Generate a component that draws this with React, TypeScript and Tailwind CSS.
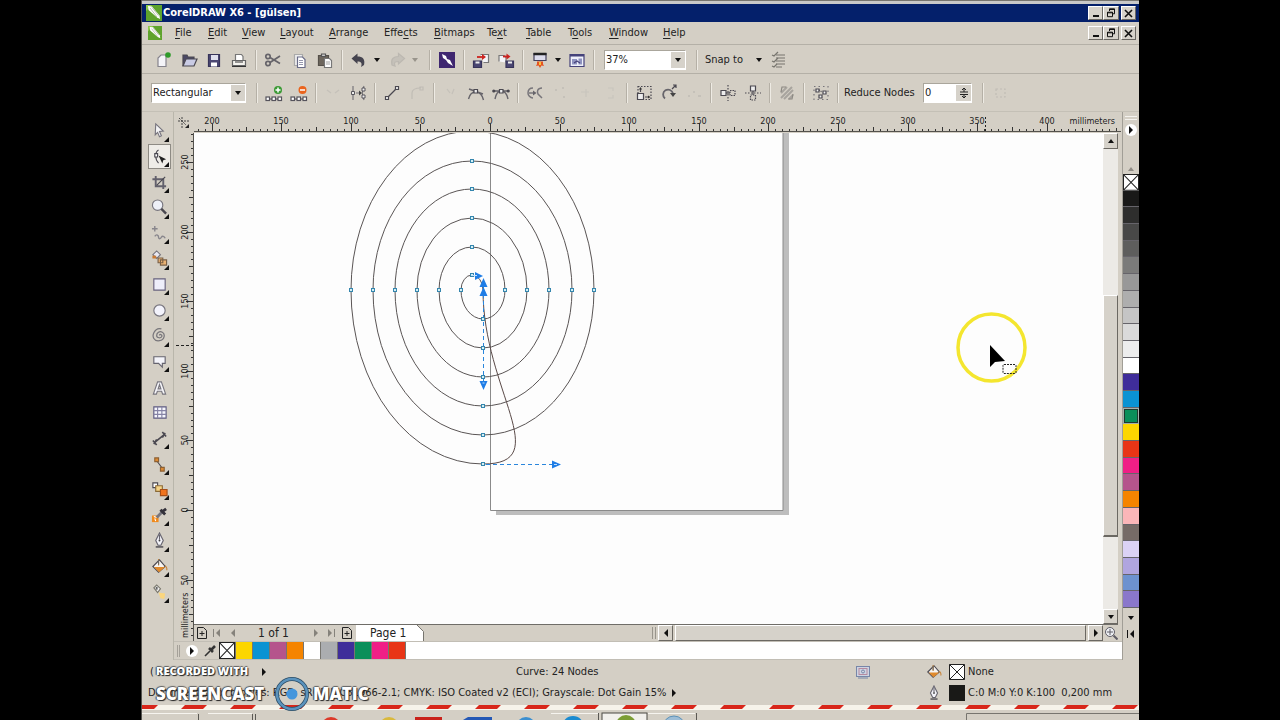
import React from "react";
import clsx from "clsx";

// ---------- small building blocks ----------

const RAISED =
  "border border-t-white border-l-white border-r-[#6b6862] border-b-[#6b6862] bg-[#d6d2ca]";

const Svg = ({ children, size = 18 }: { children: React.ReactNode; size?: number }) => (
  <svg width={size} height={size} viewBox="0 0 18 18" fill="none" stroke="#4a4850" strokeWidth="1.2">
    {children}
  </svg>
);

const Tri = ({ dir, color = "#111" }: { dir: "up" | "down" | "left" | "right"; color?: string }) => {
  const points = {
    up: "1,6 4,2 7,6",
    down: "1,2 7,2 4,6",
    left: "6,0 2,4 6,8",
    right: "2,0 6,4 2,8",
  }[dir];
  return (
    <svg width="8" height="8" viewBox="0 0 8 8" className="shrink-0">
      <polygon points={points} fill={color} />
    </svg>
  );
};

const Sep = () => (
  <span className="flex w-[9px] shrink-0 justify-center">
    <span className="h-5 w-px bg-[#b5b0a6]" />
    <span className="h-5 w-px bg-[#eeebe4]" />
  </span>
);

const ToolButton = ({ label, faint, children }: { label: string; faint?: boolean; children: React.ReactNode }) => (
  <button
    aria-label={label}
    className={clsx("flex h-6 w-[25px] shrink-0 items-center justify-center", faint && "opacity-25")}
  >
    <Svg>{children}</Svg>
  </button>
);

const DropArrow = ({ label, color }: { label: string; color?: string }) => (
  <button aria-label={label} className="flex h-6 w-3 shrink-0 items-center justify-center">
    <Tri dir="down" color={color} />
  </button>
);

const Combo = ({ label, value, className }: { label: string; value: string; className: string }) => (
  <label
    className={clsx("flex h-5 shrink-0 items-center border border-[#aaa69c] border-r-white border-b-white bg-white", className)}
  >
    <select aria-label={label} className="h-full min-w-0 flex-1 appearance-none bg-transparent pl-px outline-none">
      <option>{value}</option>
    </select>
    <span className="flex h-4 w-[14px] items-center justify-center bg-[#d6d2ca]">
      <Tri dir="down" />
    </span>
  </label>
);

const AppLogo = ({ size }: { size: number }) => (
  <svg width={size} height={size} viewBox="0 0 16 16" className="shrink-0">
    <rect width="16" height="16" fill="#5fa32c" />
    <path d="M0 0h6L0 6z" fill="#8fcb4a" />
    <path d="M2 1l4 .5 7.500 9L14 14l-3-1.500L2.500 5z" fill="#fff" />
    <path d="M4 3l7 9M6 2.500l6.500 8" stroke="#9aa58e" strokeWidth=".7" />
  </svg>
);

// ---------- window chrome ----------

const WindowButtons = () => (
  <div className="flex h-[14px] text-[#111]">
    <button aria-label="Minimize" className={clsx("flex w-[15px] items-end justify-center pb-0.5", RAISED)}>
      <span className="h-0.5 w-1.5 bg-[#111]" />
    </button>
    <button aria-label="Restore" className={clsx("flex w-4 items-center justify-center", RAISED)}>
      <svg width="10" height="10" viewBox="0 0 10 10" fill="none" stroke="#111">
        <path d="M3.500 3V.8h5v5H7M3 1.500h6M1.500 4.200h5v4.500h-5zM1 4.800h6" />
      </svg>
    </button>
    <button aria-label="Close" className={clsx("ml-0.5 flex w-[15px] items-center justify-center", RAISED)}>
      <svg width="9" height="9" viewBox="0 0 9 9" stroke="#111" strokeWidth="1.600">
        <path d="M1 1l7 7M8 1L1 8" />
      </svg>
    </button>
  </div>
);

// [before, accelerator, after, width]
const MENUS: [string, string, string, string][] = [
  ["", "F", "ile", "w-[33px]"],
  ["", "E", "dit", "w-[34px]"],
  ["", "V", "iew", "w-[38px]"],
  ["", "L", "ayout", "w-[49px]"],
  ["", "A", "rrange", "w-[55px]"],
  ["Effe", "c", "ts", "w-[50px]"],
  ["", "B", "itmaps", "w-[53px]"],
  ["Te", "x", "t", "w-[39px]"],
  ["", "T", "able", "w-[42px]"],
  ["T", "o", "ols", "w-[41px]"],
  ["", "W", "indow", "w-[54px]"],
  ["", "H", "elp", "w-[33px]"],
];

const MenuBar = () => (
  <nav className="flex h-[23px] items-center border-b border-[#b4b0a7] pr-[3px] pl-[6px]">
    <AppLogo size={14} />
    <div className="ml-[13px] flex">
      {MENUS.map(([pre, key, post, width]) => (
        <button key={pre + key + post} className={clsx("text-left whitespace-nowrap", width)}>
          {pre}
          <u className="underline-offset-2">{key}</u>
          {post}
        </button>
      ))}
    </div>
    <div className="ml-auto">
      <WindowButtons />
    </div>
  </nav>
);

// ---------- toolbars ----------

const StandardBar = () => (
  <div className="flex h-[29px] items-center border-b border-[#b4b0a7] pt-0.5 pl-[9px]">
    <div className="flex">
      <ToolButton label="New">
        <path d="M3 15.500V7l3-3h5v11.500z" fill="#f4f4f8" stroke="#85838c" />
        <circle cx="13" cy="4" r="2.800" fill="#2e9b2a" stroke="none" />
      </ToolButton>
      <ToolButton label="Open">
        <path d="M3 15V4h4l1 2h6v2" fill="#4b4866" />
        <path d="M3 15l3-7h11l-3 7z" fill="#c9cbe4" />
      </ToolButton>
      <ToolButton label="Save">
        <path d="M3.500 3.500h11v12h-11z" fill="#4b4772" stroke="#37345a" />
        <path d="M6 4h7v5H6z" fill="#dfe0ee" stroke="none" />
        <path d="M6 11.500h6v4H6z" fill="#fff" stroke="none" />
      </ToolButton>
      <ToolButton label="Print">
        <path d="M5.500 10V3.500h6l1.500 2V10" fill="#fff" stroke="#777" />
        <path d="M2.500 9.500h13v5h-13z" fill="#f4f3ee" stroke="#666" />
        <path d="M2 15.500h14M5 11h8" stroke="#333" />
      </ToolButton>
    </div>
    <Sep />
    <div className="flex gap-px">
      <ToolButton label="Cut">
        <g strokeWidth="1.700" stroke="#66646a">
          <circle cx="4" cy="5.500" r="2.200" />
          <circle cx="4" cy="12.500" r="2.200" />
          <path d="M6 6.500l10 6M6 11.500L16 5" />
        </g>
      </ToolButton>
      <ToolButton label="Copy">
        <path d="M4.500 3.500h8v11h-8z" fill="#eee" stroke="#aaa" />
        <path d="M7.500 6h5l2.500 2.500v8H7.500z" fill="#fff" stroke="#6a6c88" />
        <path d="M9 9.500h4M9 11.500h4M9 13.500h4" stroke="#7a7c98" strokeWidth=".8" />
      </ToolButton>
      <ToolButton label="Paste">
        <path d="M2.500 4.500h10v10h-10z" fill="#6d665d" stroke="#55504a" />
        <path d="M5.500 3h4v2.500h-4z" fill="#ccc" stroke="#555" />
        <path d="M8.500 7.500h5l2 2v7h-7z" fill="#fff" stroke="#777" />
        <path d="M10 11h4M10 13h4" stroke="#888" strokeWidth=".8" />
      </ToolButton>
    </div>
    <Sep />
    <ToolButton label="Undo">
      <path d="M1.500 7.500l6-5v3c5 0 8 2.500 6.500 8.500l-3 2c1.500-4 0-5.500-3.500-5.500V13z" fill="#45444f" stroke="none" />
    </ToolButton>
    <DropArrow label="Undo list" />
    <span className="w-px" />
    <ToolButton label="Redo" faint>
      <path d="M16.500 7.500l-6-5v3C5.500 5.500 2.500 8 4 14l3 1c-1.500-4 0-4.500 3.500-4.500V13z" fill="#999" stroke="#777" />
    </ToolButton>
    <DropArrow label="Redo list" color="#98948b" />
    <span className="w-1" />
    <Sep />
    <ToolButton label="Search content">
      <path d="M1 1h16v16H1z" fill="#3f2770" stroke="none" />
      <path d="M4 3l4 2 1 3 3 1 3 6-5-3-2-3-3-2z" fill="#fff" stroke="none" />
    </ToolButton>
    <Sep />
    <ToolButton label="Import">
      <path d="M8.500 3.500h8v8h-5" fill="#f4f4f8" stroke="#777" />
      <path d="M1.500 10h8v6.500h-8z" fill="#4a4672" stroke="#37345a" />
      <path d="M3.500 10.500h4v2h-4z" fill="#eee" stroke="none" />
      <path d="M5 6h6" stroke="#cc2420" strokeWidth="1.800" />
      <path d="M10 3l4 3-4 3z" fill="#cc2420" stroke="none" />
    </ToolButton>
    <ToolButton label="Export">
      <path d="M2 10.500v-6h5l2 2v5" fill="#f4f4f8" stroke="#777" />
      <path d="M9 10h7.500v6.500H9z" fill="#4a4672" stroke="#37345a" />
      <path d="M11 10.500h4v2h-4z" fill="#eee" stroke="none" />
      <path d="M6 5.500h5" stroke="#cc2420" strokeWidth="1.800" />
      <path d="M9.500 2.500l4 3-4 3z" fill="#cc2420" stroke="none" />
    </ToolButton>
    <Sep />
    <ToolButton label="Application launcher">
      <path d="M3 2.500h12v7H3z" fill="#dcdcec" stroke="#44415e" />
      <path d="M2.500 3h13" stroke="#222" strokeWidth="2.500" />
      <path d="M6 10.500h6V13l1 2-2.500-.5L9 17l-1.500-2.500L5 15l1-2z" fill="#e55320" stroke="none" />
      <path d="M8 11h2v3H8z" fill="#f7c33c" stroke="none" />
    </ToolButton>
    <DropArrow label="Launcher list" />
    <ToolButton label="Welcome screen">
      <path d="M2 3.500h14v12H2z" fill="#eef0fa" stroke="#45427a" />
      <path d="M2 4.500h14" stroke="#45427a" strokeWidth="2" />
      <path d="M4 8h5v5.500H4zM10.500 7.500h3.500v6h-3.500z" fill="#8f93c0" stroke="none" />
      <path d="M6 12l3-2 3 2" stroke="#45427a" />
    </ToolButton>
    <Sep />
    <Combo label="Zoom level" value="37%" className="ml-1.5 w-[82px]" />
    <span className="w-1.5" />
    <Sep />
    <button className="ml-1 w-12 shrink-0 text-left whitespace-nowrap">Snap to</button>
    <DropArrow label="Snap options" />
    <ToolButton label="Options">
      <path d="M7 4h9M7 7h9M7 10h9M7 13h9M7 16h6" stroke="#77756e" />
      <path d="M3 4l2 1 4-4M3 10l2 1 4-4M3 15l2 1 3-3" stroke="#77756e" />
    </ToolButton>
  </div>
);

const NodeRow = ({ y = 13 }: { y?: number }) => (
  <>
    {[2, 8, 14].map((x) => (
      <rect key={x} x={x - 1} y={y} width="3.500" height="3.500" fill="#fff" stroke="#55535c" />
    ))}
    <path d={`M5 ${y + 2}h2M11 ${y + 2}h2`} strokeWidth="1" />
  </>
);

const PropertyBar = () => (
  <div className="flex h-[38px] items-center border-b border-[#c4c0b6] pl-[9px]">
    <Combo label="Selection mode" value="Rectangular" className="w-[95px]" />
    <span className="w-[6px]" />
    <Sep />
    <ToolButton label="Add node">
      <NodeRow />
      <circle cx="13" cy="6" r="4" fill="#3b9a35" stroke="none" />
      <path d="M10.500 6h5M13 3.500v5" stroke="#fff" strokeWidth="1.500" />
    </ToolButton>
    <ToolButton label="Delete node">
      <NodeRow />
      <circle cx="12.500" cy="6" r="4" fill="#ea641d" stroke="none" />
      <path d="M10 6h5" stroke="#fff" strokeWidth="1.500" />
    </ToolButton>
    <Sep />
    <ToolButton label="Join nodes" faint>
      <path d="M3 6l4 3M15 6l-4 3" stroke="#999" />
    </ToolButton>
    <ToolButton label="Break curve">
      <path d="M4 2v14M15 2c-2 4-2 9 0 14M7 9h4" stroke="#77757a" />
      <path d="M10 6.500L13 9l-3 2.500z" fill="#444" stroke="none" />
      <path d="M2.500 7.500h3v3h-3zM13 4h3v3h-3zM13 11h3v3h-3z" fill="#eee" strokeWidth=".9" />
    </ToolButton>
    <Sep />
    <ToolButton label="Convert to line">
      <path d="M4.500 13.500l9-9" />
      <path d="M2.500 12.500h3v3h-3zM12.500 2.500h3v3h-3z" fill="#eee" />
    </ToolButton>
    <ToolButton label="Convert to curve" faint>
      <path d="M4 15V9c0-4 4-5 9-5M12 3h3v3h-3z" stroke="#888" />
    </ToolButton>
    <Sep />
    <ToolButton label="Cusp node" faint>
      <path d="M5 5l3 4M12 5l-2 5" stroke="#999" />
    </ToolButton>
    <ToolButton label="Smooth node">
      <path d="M2 5l14 5M1.500 15c1-4 3-7 7-7 5 0 7 4 8 8" stroke="#66646a" strokeWidth="1.400" />
      <path d="M7 5.500h3.500V9H7z" fill="#eee" />
    </ToolButton>
    <ToolButton label="Symmetrical node">
      <path d="M1 7h16M3 15c1-5 3-8 6-8s6 3 7 8" stroke="#66646a" strokeWidth="1.400" />
      <path d="M7.500 5.500H11V9H7.500z" fill="#eee" />
      <circle cx="1.800" cy="7" r="1" fill="#444" />
      <circle cx="16.200" cy="7" r="1" fill="#444" />
    </ToolButton>
    <Sep />
    <ToolButton label="Reverse direction">
      <path d="M7 4C3 4 2 7 2 9s2 5 5 5M3 9h6M16 4c-5 0-5 4-4 6l4 4" stroke="#77757a" strokeWidth="1.500" />
      <path d="M7 6.500L10.500 9 7 11.500z" fill="#66646a" stroke="none" />
    </ToolButton>
    <ToolButton label="Extend curve" faint>
      <path d="M4 6h2M11 4h2M12 13h2" stroke="#999" strokeWidth="2" />
    </ToolButton>
    <ToolButton label="Extract subpath" faint>
      <path d="M5 8h8M10 5v8" stroke="#aaa" />
    </ToolButton>
    <ToolButton label="Close curve" faint>
      <path d="M7 4h5v3M12 11v3H7" stroke="#aaa" />
    </ToolButton>
    <Sep />
    <ToolButton label="Stretch nodes">
      <path d="M3 2.500h13v13H3z" strokeDasharray="1.500 1.500" />
      <path d="M2.500 9.500h6v6h-6z" fill="#eee" />
      <path d="M5.500 8V4M10 13h4" />
      <path d="M4 5.500L5.500 3 7 5.500zM13 11.500l2.500 1.500-2.500 1.500z" fill="#333" stroke="none" />
    </ToolButton>
    <ToolButton label="Rotate nodes">
      <path d="M5 14.500A5 5 0 1 1 13 9.500" strokeWidth="1.800" stroke="#66646a" />
      <path d="M10 9h6l-3 4z" fill="#444" stroke="none" />
      <path d="M12 5l4-4M13 1h3v3" />
    </ToolButton>
    <ToolButton label="Align nodes" faint>
      <path d="M3 12h2M8 8h2M13 12h3" stroke="#999" strokeWidth="2" />
    </ToolButton>
    <Sep />
    <ToolButton label="Reflect horizontally">
      <path d="M9 1v16" strokeDasharray="1.500 1.500" />
      <path d="M2 6.500h5v5H2z" fill="#eee" />
      <path d="M11 6.500h5v5h-5z" strokeDasharray="1.500 1" />
      <path d="M7 9h4" />
    </ToolButton>
    <ToolButton label="Reflect vertically">
      <path d="M1 9h16" strokeDasharray="1.500 1.500" />
      <path d="M6.500 2h5v5h-5z" fill="#eee" />
      <path d="M6.500 11h5v5h-5z" strokeDasharray="1.500 1" />
      <path d="M9 7v4" />
    </ToolButton>
    <Sep />
    <ToolButton label="Elastic mode">
      <path d="M3 9l6-6M3 14L14 3M6 15l9-9M11 15l4-4" stroke="#a8a49e" strokeWidth="2" />
      <path d="M8 3H4L3 8M10 15h4l1-5" stroke="#8b8882" />
    </ToolButton>
    <Sep />
    <ToolButton label="Select all nodes">
      <path d="M2 2.500h14v13H2z" stroke="#77757a" strokeDasharray="1.500 3" />
      <path d="M4 5h3v3H4zM11 7h3v3h-3zM7 11h3v3H7z" fill="#eee" />
      <path d="M7 6l3 2" strokeDasharray="1 1" />
    </ToolButton>
    <Sep />
    <label className="ml-0.5 flex shrink-0 items-center whitespace-nowrap">
      <span className="w-[79px]">Reduce Nodes</span>
      <span className="flex h-5 w-[49px] items-center border border-[#aaa69c] border-r-white border-b-white bg-white">
        <input defaultValue="0" className="w-8 pl-px outline-none" />
        <span className="flex h-4 flex-1 items-center justify-center bg-[#d6d2ca]">
          <svg width="10" height="12" viewBox="0 0 10 12" stroke="#222" fill="none">
            <path d="M1 5h8M1 7.500h8M5 1v4M5 7v4" />
            <path d="M3 3l2-2 2 2M3 9l2 2 2-2" />
          </svg>
        </span>
      </span>
    </label>
    <span className="w-1.5" />
    <Sep />
    <ToolButton label="Bounding box" faint>
      <path d="M5 5h9v8H5z" stroke="#888" strokeDasharray="2 2" />
    </ToolButton>
  </div>
);

// ---------- toolbox ----------

const Bucket = () => (
  <>
    <path d="M2 9l7-7 6 7-7 6z" fill="#f6f4f2" />
    <path d="M3 9.500h12L8.500 15z" fill="#e08a2d" stroke="none" />
    <path d="M8 1v7M15 8c2 2 2 4 1.500 5" stroke="#c8853c" />
    <path d="M8 2v5" stroke="#666" />
  </>
);

const PenNib = () => (
  <>
    <path d="M9 1l4 8-2.500 5h-3L5 9z" fill="#f2f2f8" stroke="#66646f" />
    <path d="M9 3v5" stroke="#66646f" />
    <path d="M5 15.800h8" strokeWidth="1.500" />
    <circle cx="9" cy="9" r="1" fill="#444" stroke="none" />
  </>
);

const TOOLS: { label: string; flyout?: boolean; icon: React.ReactNode }[] = [
  { label: "Pick", flyout: true, icon: <path d="M5 2l8 7.500-4 .5 2 4.500-2 1L7 11l-2.500 2.500z" fill="#f4f4f6" stroke="#77757e" /> },
  {
    label: "Shape",
    flyout: true,
    icon: (
      <>
        <path d="M8 2C4 4 4 12 8 16" />
        <path d="M4 6h3v3.500H4z" fill="#fff" />
        <path d="M8 8l8 4-3 1-1 3.500z" fill="#222" stroke="none" />
      </>
    ),
  },
  {
    label: "Crop",
    flyout: true,
    icon: (
      <>
        <path d="M5 2v11h11M1.500 5.500H13V16" strokeWidth="2" stroke="#62606c" />
        <path d="M6 12l9-9" />
      </>
    ),
  },
  {
    label: "Zoom",
    flyout: true,
    icon: (
      <>
        <circle cx="7" cy="6.500" r="5.500" fill="#eef0f8" stroke="#77757e" />
        <path d="M11 10.500l5 5" strokeWidth="2.500" />
      </>
    ),
  },
  {
    label: "Freehand",
    flyout: true,
    icon: <path d="M4 1v6M1 4h6M4 12c2-3 4-1 4 1s2 2 3 0 3-1 4 1" stroke="#88868c" strokeWidth="1.500" />,
  },
  {
    label: "Smart fill",
    flyout: true,
    icon: (
      <>
        <path d="M2 5l4-4 4 4-4 4z" fill="#e9e9f2" stroke="#77757e" />
        <path d="M1.500 6h4v3h-4z" fill="#c87a35" stroke="none" />
        <path d="M7.500 8.500h5v5h-5zM10 10.500h6.500V16H10z" fill="#eab273" stroke="#7a6046" />
      </>
    ),
  },
  { label: "Rectangle", flyout: true, icon: <path d="M3 3h12v12H3z" fill="#eeeefa" stroke="#66607c" /> },
  { label: "Ellipse", flyout: true, icon: <circle cx="9" cy="9" r="6" fill="#f3f3fc" stroke="#77757e" /> },
  {
    label: "Spiral",
    flyout: true,
    icon: <path d="M9 9c0-2 3-1 2.500 1S6 12 6 9s3-5 6-3.500 3 8-3 9S1 10 3 6s5-5 8-4" stroke="#77757a" strokeWidth="1.300" />,
  },
  { label: "Callout", flyout: true, icon: <path d="M3 4h12v7h-3v4l-4-4H3z" fill="#f4f4fa" stroke="#66646f" /> },
  {
    label: "Text",
    icon: <path d="M2.500 16L7 3h4l4.500 13h-3.200l-1-3H6.700l-1 3zM7.500 10.500h3L9 6z" fill="#f6f6fa" stroke="#77757e" />,
  },
  {
    label: "Table",
    icon: (
      <>
        <path d="M3 3h13v12H3z" fill="#f6f6fd" stroke="#5d5a80" />
        <path d="M7 3v12M11.500 3v12M3 7h13M3 11h13" stroke="#8583a5" />
      </>
    ),
  },
  { label: "Dimension", flyout: true, icon: <path d="M4 13L14 5M2 11l4 5M12 2l4 5M3 15l3-5M15 3l-3 5" strokeWidth="1.700" /> },
  {
    label: "Connector",
    flyout: true,
    icon: (
      <>
        <path d="M6 5l6 8" />
        <path d="M4 2h4v4H4zM10 12h4v4h-4z" fill="#dc8a34" stroke="#8d6032" />
      </>
    ),
  },
  {
    label: "Blend",
    flyout: true,
    icon: (
      <>
        <path d="M2 2h5v5H2z" fill="#fff" />
        <path d="M5 5h7v6H5z" fill="#f6d487" stroke="#8a6a37" />
        <path d="M10 9h7v6.500h-7z" fill="#f0731d" stroke="#a54e17" />
      </>
    ),
  },
  {
    label: "Color eyedropper",
    flyout: true,
    icon: (
      <>
        <path d="M1 9h7v7H1z" fill="#ef8a1c" stroke="none" />
        <path d="M4 12l1 3M3 10l3 1" stroke="#fff" />
        <path d="M6 11l6-6" stroke="#77757e" strokeWidth="3" />
        <path d="M10 3l5 5M12 5l4-3" stroke="#33313a" strokeWidth="3" />
      </>
    ),
  },
  { label: "Outline pen", flyout: true, icon: <PenNib /> },
  { label: "Fill", flyout: true, icon: <Bucket /> },
  {
    label: "Interactive fill",
    flyout: true,
    icon: (
      <>
        <path d="M3 4l3-3 4 4-3 4z" fill="#eee" stroke="#77756a" />
        <path d="M6 3v3" stroke="#666" strokeWidth="2" />
        <path d="M8 9l7 1-1 6-4-1z" fill="#fbd67e" stroke="none" />
      </>
    ),
  },
];

const Toolbox = () => (
  <aside className="w-8 shrink-0 border-r border-[#b9b6ab] pt-1.5 pl-1.5">
    <div className="grid h-[487px] auto-rows-fr">
      {TOOLS.map(({ label, flyout, icon }) => (
        <button
          key={label}
          aria-label={label}
          className={clsx(
            "relative flex w-[23px] items-center justify-center border",
            label === "Shape" ? "border-[#8e8b84] bg-[#efede8]" : "border-transparent"
          )}
        >
          <Svg size={17}>{icon}</Svg>
          {flyout && (
            <svg width="5" height="5" className="absolute right-px bottom-px">
              <path d="M5 0v5H0z" fill="#111" />
            </svg>
          )}
        </button>
      ))}
    </div>
  </aside>
);

// ---------- rulers ----------

const PX_PER_5MM = 6.96;
const tickLength = (i: number) => (i % 10 === 0 ? 7 : i % 5 === 0 ? 4 : 2);
const range = (from: number, to: number) => Array.from({ length: to - from + 1 }, (_, i) => from + i);

const HorizontalRuler = () => {
  const origin = 296;
  return (
    <div className="relative h-5 min-w-0 flex-1 overflow-hidden border-b border-[#55534e] text-[9px]">
      <svg width="100%" height="20" className="block">
        {range(-42, 90).map((i) => {
          const x = Math.round(origin + i * PX_PER_5MM);
          return <rect key={i} x={x} y={19 - tickLength(i)} width="1" height={tickLength(i)} fill="#333" />;
        })}
        {range(-4, 8).map((n) => (
          <text key={n} x={Math.round(origin + n * 10 * PX_PER_5MM)} y="12" textAnchor="middle" fill="#222">
            {Math.abs(n * 50)}
          </text>
        ))}
        <path d="M791.500 5v15" stroke="#222" strokeDasharray="2 2" />
      </svg>
      <span className="absolute top-0.5 right-1 bg-[#d4cfc5] px-0.5 leading-[14px]">millimeters</span>
    </div>
  );
};

const VerticalRuler = () => {
  const origin = 377;
  return (
    <div className="relative w-5 shrink-0 overflow-hidden border-r border-[#55534e] text-[9px]">
      <svg width="20" height="508" className="block">
        {range(-54, 18).map((i) => {
          const y = Math.round(origin + i * PX_PER_5MM);
          return <rect key={i} x={19 - tickLength(i)} y={y} width={tickLength(i)} height="1" fill="#333" />;
        })}
        {range(-5, 1).map((n) => {
          const y = Math.round(origin + n * 10 * PX_PER_5MM);
          return (
            <text key={n} x="14" y={y} textAnchor="middle" fill="#222" transform={`rotate(-90 14 ${y})`}>
              {Math.abs(n * 50)}
            </text>
          );
        })}
        <text x="14" y="505" fill="#222" transform="rotate(-90 14 505)">
          millimeters
        </text>
        <path d="M2 212.500h18" stroke="#222" strokeDasharray="3 2" />
      </svg>
    </div>
  );
};

// ---------- drawing ----------

const CX = 483;
const CY = 290;
const TOP_X = 472;
const rights = [CX, 505, 527, 549, 572, 594];
const lefts = [461, 439, 417, 395, 373, 351];
const tops = [275, 247, 218, 189, 161, 131];
const bottoms = [319, 348, 377, 406, 435, 464];

const spiral = rights
  .map((r, i) => {
    const up = CY - tops[i];
    const down = bottoms[i] - CY;
    const next = rights[i + 1];
    const start = i === 0 ? `M${r} ${CY}` : "";
    const end = next ? `A${next - CX} ${down} 0 0 0 ${next} ${CY}` : "";
    return (
      `${start}A${r - TOP_X} ${up} 0 0 0 ${TOP_X} ${tops[i]}` +
      `A${TOP_X - lefts[i]} ${up} 0 0 0 ${lefts[i]} ${CY}` +
      `A${CX - lefts[i]} ${down} 0 0 0 ${CX} ${bottoms[i]}${end}`
    );
  })
  .join("");

const nodes: [number, number][] = [
  ...rights.slice(1).map((x): [number, number] => [x, CY]),
  ...lefts.map((x): [number, number] => [x, CY]),
  ...tops.slice(0, 5).map((y): [number, number] => [TOP_X, y]),
  ...bottoms.map((y): [number, number] => [CX, y]),
];

const Canvas = () => (
  <div className="min-w-0 flex-1 overflow-hidden bg-[#fdfdfd]">
    <svg width="100%" height="490" className="block">
      {/* canvas origin sits at the ruler corner */}
      <g transform="translate(-194 -133)" fill="none">
        <path d="M783 133h6v382H496v-5h287z" fill="#bdbdbd" />
        <path d="M490.500 133v377.500h292.500V133" stroke="#8a8a8a" />
        <path d={spiral} stroke="#5a5555" />
        <path d={`M${CX} 464C556 464 ${CX} 390 ${CX} ${CY}`} stroke="#5a4a48" />
        <path d="M483.500 280v104M486 464.500h68" stroke="#2a86dc" strokeDasharray="4 3" />
        {nodes.map(([x, y]) => (
          <rect key={`${x}-${y}`} x={x - 1.5} y={y - 1.5} width="3" height="3" fill="#d5f0f5" stroke="#3586ae" />
        ))}
        <g fill="#1f7de6">
          <path d="M483.500 287l4 9h-8zM483.500 390l-4-9h8zM561 464.500l-9-4v8zM483 276l-8-4v8z" />
          <path d="M483.500 278l4 9h-8z" />
        </g>
        <path d="M482.500 383h2M554 464.500h3M471 275.500h6" stroke="#bfe0ff" />
        <circle cx="991.500" cy="347.500" r="33.500" stroke="#f4e62f" strokeWidth="3.500" />
        <path d="M990 345v22l5-5 10-1z" fill="#000" />
        <rect x="1003" y="364.500" width="13" height="9" rx="1" stroke="#222" strokeDasharray="2 1" />
      </g>
    </svg>
  </div>
);

const VerticalScroll = () => (
  <div className="flex w-[15px] shrink-0 flex-col bg-[#eceae6]">
    <button aria-label="Scroll up" className={clsx("flex h-4 items-center justify-center", RAISED)}>
      <Tri dir="up" />
    </button>
    <span className="flex-[147]" />
    <span className={clsx("flex-[241] border-b-2", RAISED)} />
    <span className="flex-[72]" />
    <button aria-label="Scroll down" className={clsx("flex h-[15px] items-center justify-center", RAISED)}>
      <Tri dir="down" />
    </button>
  </div>
);

const AddPage = () => (
  <svg width="10" height="12" viewBox="0 0 10 12" fill="none" stroke="#222">
    <path d="M.5 .5h6l3 3v8h-9zM5 4v5M2.500 6.500h5" />
  </svg>
);

const PageBar = () => (
  <div className="flex h-[17px] items-center border-t border-[#6f6d68] text-[12px]">
    <button aria-label="Add page before" className="ml-[3px] w-[14px]"><AddPage /></button>
    <button aria-label="First page" className="flex w-[14px]">
      <span className="ml-0.5 h-2 w-px bg-[#85827b]" />
      <Tri dir="left" color="#85827b" />
    </button>
    <button aria-label="Previous page" className="ml-1 w-7"><Tri dir="left" color="#85827b" /></button>
    <span className="w-[55px] pl-px whitespace-nowrap">1 of 1</span>
    <button aria-label="Next page" className="w-[14px]"><Tri dir="right" color="#85827b" /></button>
    <button aria-label="Last page" className="flex w-4">
      <Tri dir="right" color="#85827b" />
      <span className="h-2 w-px bg-[#85827b]" />
    </button>
    <button aria-label="Add page after" className="w-[14px]"><AddPage /></button>
    <button className="flex h-full items-center">
      <span className="flex h-full w-[54px] items-center bg-white pl-3.5 whitespace-nowrap">Page 1</span>
      <svg width="14" height="16" viewBox="0 0 14 16">
        <path d="M0 0h7l7 7v9H0z" fill="#fff" />
        <path d="M7 0l6.500 6.500V16" fill="none" stroke="#77756f" />
      </svg>
    </button>
    <span className="ml-auto flex gap-0.5 pr-0.5">
      <span className="h-3 w-px bg-[#99958c]" />
      <span className="h-3 w-px bg-[#99958c]" />
    </span>
    <div className="flex h-full w-[460px] items-stretch">
      <button aria-label="Scroll left" className={clsx("flex w-[15px] items-center justify-center", RAISED)}>
        <Tri dir="left" />
      </button>
      <span className={clsx("mx-0.5 flex-1", RAISED)} />
      <button aria-label="Scroll right" className={clsx("flex w-[15px] items-center justify-center", RAISED)}>
        <Tri dir="right" />
      </button>
      <button aria-label="Navigator" className="flex w-[15px] items-center justify-center">
        <svg width="14" height="14" viewBox="0 0 14 14" fill="none" stroke="#5f5d66">
          <circle cx="6" cy="6" r="4.500" fill="#eef0f4" />
          <path d="M6 3v6M3 6h6" />
          <path d="M9.500 9.500l4 4" strokeWidth="2" />
        </svg>
      </button>
    </div>
  </div>
);

// ---------- palettes ----------

const NoColor = () => (
  <svg width="100%" height="100%" viewBox="0 0 16 16" preserveAspectRatio="none" className="block bg-white">
    <path d="M.5 .5h15v15H.5zM.5 .5l15 15M15.500 .5L.5 15.500" fill="none" stroke="#222" />
  </svg>
);

const DOC_COLORS = ["#fcd600", "#0a93d3", "#b5548c", "#f58400", "#ffffff", "#abadb0", "#3f2d9a", "#0b8f5a", "#f01f86", "#e83516"];

const DocumentPalette = () => (
  <div className="flex h-[19px] items-stretch border-y border-[#c2beb5] bg-white">
    <div className="flex w-[45px] items-center bg-[#d4cfc5]">
      <span className="ml-[3px] h-3 w-[3px] border-x border-[#a5a199]" />
      <button aria-label="Palette options" className="ml-1.5 flex size-3 items-center justify-center rounded-full bg-white">
        <Tri dir="right" />
      </button>
      <button aria-label="Eyedropper" className="ml-1.5">
        <svg width="12" height="12" viewBox="0 0 12 12" stroke="#333">
          <path d="M1 11l5-5" strokeWidth="1.600" />
          <path d="M5 3l4 4M7.500 4.500L11 1" strokeWidth="2.600" />
        </svg>
      </button>
    </div>
    <button aria-label="No color" className="w-4"><NoColor /></button>
    <div className="flex border-r border-[#77756f]">
      {DOC_COLORS.map((c) => (
        <button key={c} aria-label={c} className="w-[17px] border-l border-[#77756f]" style={{ backgroundColor: c }} />
      ))}
    </div>
  </div>
);

const PALETTE = [
  "#191918", "#2e2e2d", "#484847", "#5e5e5d", "#7b7b7a", "#989898", "#aeaeae", "#c5c5c5", "#dadada", "#ededed", "#ffffff",
  "#3f2d9a", "#0a93d3", "#0b8f5a", "#fcd600", "#e83516", "#f01f86", "#b5548c", "#f58400", "#fbb6b8", "#766b66",
  "#dbd2f5", "#b0a5df", "#6d92cf", "#8a77cb",
];
const SELECTED = "#0b8f5a";

const ColorPalette = () => (
  <aside className="flex w-[17px] shrink-0 flex-col items-center border-l border-[#a19e96]">
    <span className="mt-1 h-1 w-3 border-y border-[#f4f2ee]" />
    <button aria-label="Palette menu" className="mt-1 flex size-3 items-center justify-center rounded-full bg-white">
      <Tri dir="right" />
    </button>
    <span className="h-7" />
    <button aria-label="Scroll palette up" className="h-2.5"><Tri dir="up" color="#8f8b84" /></button>
    <div className="grid h-[434px] w-full auto-rows-fr">
      <button aria-label="No fill"><NoColor /></button>
      {PALETTE.map((c) => (
        <button
          key={c}
          aria-label={c}
          className={c === SELECTED ? "border-2 border-[#1e3a2e] outline outline-white/60 -outline-offset-1" : "border-b border-[#66646a]"}
          style={{ backgroundColor: c }}
        />
      ))}
    </div>
    <button aria-label="Scroll palette down" className="mt-1.5"><Tri dir="down" /></button>
    <button aria-label="Expand palette" className="mt-2 flex">
      <span className="h-2 w-px bg-[#111]" />
      <Tri dir="left" />
    </button>
  </aside>
);

// ---------- status ----------

const Watermark = () => (
  <div className="absolute top-0 left-3.5 font-['Open_Sans',sans-serif] font-extrabold text-white [text-shadow:1px_1px_1px_#222,-1px_0_1px_#444,0_-1px_1px_#666]">
    <div className="flex h-[22px] items-center text-[11px] whitespace-nowrap">RECORDED WITH</div>
    <div className="flex h-6 items-center text-[17px]">
      <span className="w-[119px]">SCREENCAST</span>
      <svg width="34" height="36" viewBox="0 0 34 36" fill="none" className="shrink-0">
        <circle cx="17" cy="18" r="15" stroke="#2c4d66" strokeWidth="4" />
        <circle cx="17" cy="18" r="15" stroke="#5b93bd" strokeWidth="2.500" />
        <circle cx="17" cy="18" r="5.500" fill="#4596dc" />
      </svg>
      <span className="ml-1">MATIC</span>
    </div>
  </div>
);

const StatusBar = () => (
  <footer className="relative flex h-[45px]">
    <div className="min-w-0 flex-1">
      <div className="flex h-6 items-center pl-2">
        <span className="w-[110px]">(</span>
        <Tri dir="right" />
        <span className="ml-[248px] whitespace-nowrap">Curve: 24 Nodes</span>
        <svg width="14" height="14" viewBox="0 0 14 14" fill="none" stroke="#7786a8" className="mr-[56px] ml-auto">
          <rect x=".5" y="1.500" width="13" height="10" fill="#cfd4e2" />
          <rect x="3" y="3.500" width="8" height="6" stroke="#b58aa0" />
          <circle cx="7" cy="6.500" r="1.500" />
          <path d="M2 13h10" />
        </svg>
      </div>
      <div className="flex h-[18px] items-center gap-1 pl-[6px] whitespace-nowrap">
        Document color profiles: RGB: sRGB IEC61966-2.1; CMYK: ISO Coated v2 (ECI); Grayscale: Dot Gain 15%
        <Tri dir="right" />
      </div>
    </div>
    <div className="w-[213px] shrink-0">
      <div className="flex h-6 items-center">
        <Svg size={16}><Bucket /></Svg>
        <span className="ml-[7px] size-4"><NoColor /></span>
        <span className="ml-[3px]">None</span>
      </div>
      <div className="flex h-[18px] items-center">
        <Svg size={16}><PenNib /></Svg>
        <span className="ml-[7px] size-4 bg-[#191917]" />
        <span className="ml-[3px] whitespace-pre">C:0 M:0 Y:0 K:100  0,200 mm</span>
      </div>
    </div>
    <Watermark />
  </footer>
);

const TaskBar = () => (
  <div className="h-[15px] overflow-hidden">
    <svg width="100%" height="5" className="block">
      <defs>
        <pattern id="stripes" width="49" height="5" patternUnits="userSpaceOnUse" x="38">
          <rect width="49" height="5" fill="#f6f3ea" />
          <path d="M5 0h22l-4 4H1z" fill="#d8261a" />
        </pattern>
      </defs>
      <rect width="100%" height="5" fill="url(#stripes)" />
    </svg>
    <svg width="100%" height="10" className="block">
      <path d="M0 3.500h55M66 3.500h44M409 3.500h47M506 3.500h47" stroke="#f6f4ef" />
      <path d="M56.500 4v6M110.500 4v6M113.500 4v6M456.500 3v7M554.500 3v7" stroke="#5b5954" />
      <rect x="460" y="3" width="45" height="8" fill="#f2f0ec" stroke="#4a4843" />
      <circle cx="189" cy="17" r="10" fill="#dc3a2a" />
      <circle cx="247" cy="17" r="10" fill="#d9b93d" />
      <rect x="273" y="7" width="27" height="4" fill="#c9221b" />
      <path d="M321 10l5-3h24v3z" fill="#2458b5" />
      <circle cx="384" cy="17" r="10" fill="#3b8fd0" />
      <circle cx="431" cy="17" r="11" fill="#1b8bd0" />
      <circle cx="484" cy="15" r="10" fill="#7c9d35" />
      <circle cx="532" cy="17" r="11" fill="#9dbdd6" stroke="#5d92b8" />
      <path d="M824.500 10V3.500H1000" fill="none" stroke="#77756f" />
    </svg>
  </div>
);

const App: React.FC = () => (
  <div className="flex min-h-screen bg-black pr-[141px] pl-[141px]">
    <main className="flex min-w-0 flex-1 flex-col border-l border-[#55534f] bg-[#d4cfc5] font-['DejaVu_Sans_Condensed','DejaVu_Sans',sans-serif] text-[11px] leading-4 text-[#222]">
      <div className="h-1 border-t border-[#77756f] bg-[#c9c9c9]" />
      <header className="flex h-[18px] items-center bg-[#04206b] pr-[3px] pl-1">
        <AppLogo size={16} />
        <h1 className="ml-px font-bold whitespace-nowrap text-white">CorelDRAW X6 - [gülsen]</h1>
        <div className="ml-auto">
          <WindowButtons />
        </div>
      </header>
      <MenuBar />
      <StandardBar />
      <PropertyBar />

      <div className="flex flex-1">
        <Toolbox />
        <div className="flex min-w-0 flex-1 flex-col">
          <div className="flex flex-1">
            <div className="flex w-5 shrink-0 flex-col">
              <div className="flex h-[21px] items-center justify-center">
                <svg width="12" height="12" viewBox="0 0 12 12" fill="none" stroke="#444">
                  <path d="M4 0v12M0 4h12M1 1l7 7" strokeDasharray="2 1" />
                  <path d="M11 7v4H7z" fill="#222" stroke="none" />
                </svg>
              </div>
              <VerticalRuler />
            </div>
            <div className="flex min-w-0 flex-1 flex-col">
              <div className="flex h-[21px] pr-px">
                <HorizontalRuler />
              </div>
              <div className="flex flex-1">
                <Canvas />
                <VerticalScroll />
                <span className="w-1" />
              </div>
              <div className="pr-1">
                <PageBar />
              </div>
            </div>
          </div>
          <DocumentPalette />
        </div>
        <ColorPalette />
      </div>

      <StatusBar />
      <TaskBar />
    </main>
  </div>
);

export default App;
